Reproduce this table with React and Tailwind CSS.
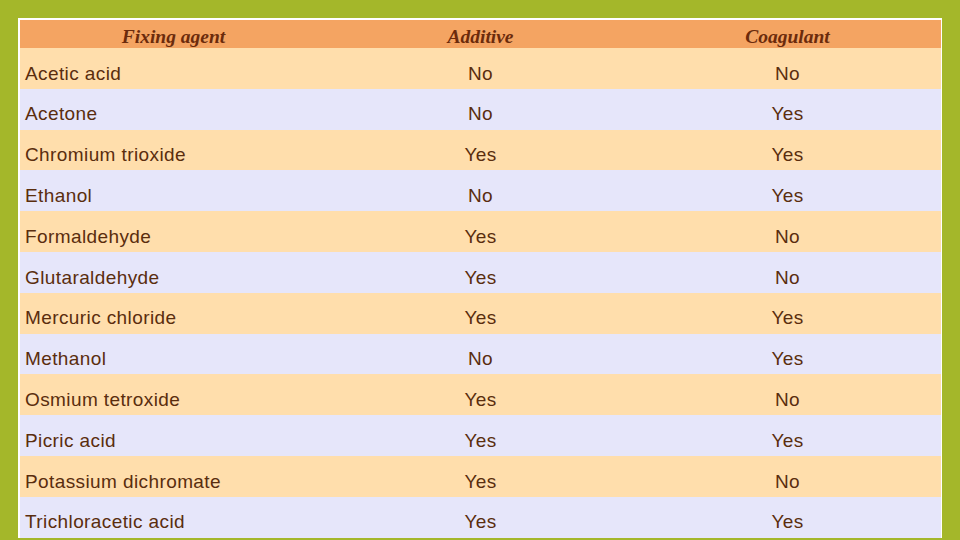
const rows = [
  ["Acetic acid", "No", "No"],
  ["Acetone", "No", "Yes"],
  ["Chromium trioxide", "Yes", "Yes"],
  ["Ethanol", "No", "Yes"],
  ["Formaldehyde", "Yes", "No"],
  ["Glutaraldehyde", "Yes", "No"],
  ["Mercuric chloride", "Yes", "Yes"],
  ["Methanol", "No", "Yes"],
  ["Osmium tetroxide", "Yes", "No"],
  ["Picric acid", "Yes", "Yes"],
  ["Potassium dichromate", "Yes", "No"],
  ["Trichloracetic acid", "Yes", "Yes"],
];

export default function App() {
  return (
    <div className="w-[960px] h-[540px] overflow-hidden bg-[#a4b72a] pl-[18px] pt-[18px]">
      <div className="w-[924px] border-l-2 border-t-2 border-r border-white bg-white">
        <div className="grid grid-cols-3 h-[28px] pt-[2px] bg-[#f4a462] items-center text-[19.5px] font-bold italic text-[#6b2b0c] [font-family:'Liberation_Serif',serif]">
          <div className="text-center">Fixing agent</div>
          <div className="text-center">Additive</div>
          <div className="text-center">Coagulant</div>
        </div>
        {rows.map((r, i) => (
          <div
            key={i}
            className={
              "grid grid-cols-3 h-[40.8px] pt-[11px] items-center text-[19px] tracking-[0.4px] text-[#5a2d0e] [font-family:'Liberation_Sans',Arial,sans-serif] " +
              (i % 2 === 0 ? "bg-[#ffdeac]" : "bg-[#e6e6fa]")
            }
          >
            <div className="pl-[5px]">{r[0]}</div>
            <div className="text-center">{r[1]}</div>
            <div className="text-center">{r[2]}</div>
          </div>
        ))}
      </div>
    </div>
  );
}
